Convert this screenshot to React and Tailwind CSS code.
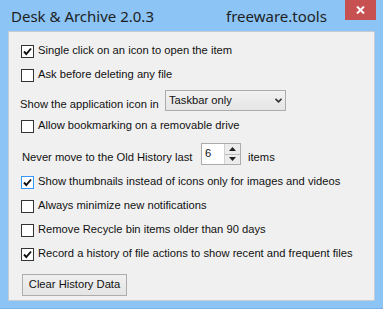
import React from 'react';

function CheckBox({ checked, focused }) {
  return (
    <span
      className={`inline-flex items-center justify-center w-[13px] h-[13px] shrink-0 bg-white border ${
        focused ? 'border-[#3399ff]' : 'border-[#333333]'
      }`}
    >
      {checked && (
        <svg width="9" height="9" viewBox="0 0 9 9">
          <path d="M1 4.5 L3.3 7 L8 1.5" fill="none" stroke="#111" strokeWidth="1.9" />
        </svg>
      )}
    </span>
  );
}

function CheckRow({ label, checked, focused, className = '' }) {
  return (
    <div className={`flex items-center h-6 pl-3 gap-1 ${className}`}>
      <CheckBox checked={checked} focused={focused} />
      <span className="text-[11.2px] text-[#111] leading-none">{label}</span>
    </div>
  );
}

export default function App() {
  return (
    <div
      className="w-[383px] h-[309px] bg-[#8bc4f5] flex flex-col border-b border-[#78b2e6]"
      style={{ fontFamily: '"Liberation Sans", Arial, sans-serif' }}
    >
      <div className="h-[31px] flex items-start shrink-0">
        <div
          className="pl-[11px] pt-[5px] text-[15px] text-[#1e1e1e] w-[226px]"
          style={{ fontFamily: '"Noto Sans", "Open Sans", sans-serif' }}
        >
          Desk &amp; Archive 2.0.3
        </div>
        <div
          className="pt-[5px] text-[15px] text-[#1e1e1e]"
          style={{ fontFamily: '"Noto Sans", "Open Sans", sans-serif' }}
        >
          freeware.tools
        </div>
        <div className="ml-auto mr-[7px] w-[31px] h-[20px] bg-[#c75050] flex items-center justify-center">
          <svg width="9" height="8" viewBox="0 0 9 8">
            <path d="M1 0.5 L8 7.5 M8 0.5 L1 7.5" stroke="#fff" strokeWidth="2" />
          </svg>
        </div>
      </div>

      <div className="mx-[8px] mb-[7px] h-[270px] bg-[#f0f0f0] border border-[#c4ccd4] flex flex-col pt-[7px]">
        <CheckRow checked label="Single click on an icon to open the item" />
        <CheckRow label="Ask before deleting any file" />

        <div className="flex items-start h-6 mt-[2px] pl-[11px]">
          <span className="text-[11.2px] text-[#111] leading-none pt-[10px] w-[145px]">
            Show the application icon in
          </span>
          <div className="mt-[1px] w-[121px] h-[21px] border border-[#acacac] bg-gradient-to-b from-[#f2f2f2] to-[#e5e5e5] flex items-center pl-[3px] pr-[3px]">
            <span className="text-[11.2px] text-[#111] leading-none">Taskbar only</span>
            <svg className="ml-auto" width="7" height="5" viewBox="0 0 7 5">
              <path d="M0.5 0.8 L3.5 3.8 L6.5 0.8" fill="none" stroke="#333" strokeWidth="1.6" />
            </svg>
          </div>
        </div>

        <CheckRow label="Allow bookmarking on a removable drive" className="mt-[1px]" />

        <div className="flex items-start h-6 mt-[4px] pl-[13px]">
          <span className="text-[11.2px] text-[#111] leading-none pt-[10px] w-[179px]">
            Never move to the Old History last
          </span>
          <div className="mt-[1px] w-[40px] h-[22px] border border-[#acacac] bg-white flex">
            <span className="text-[11.2px] text-[#111] leading-none pl-[3px] pt-[4px] w-[22px]">6</span>
            <div className="ml-auto w-[16px] flex flex-col border-l border-[#d0d0d0]">
              <div className="flex-1 bg-[#ececec] border-b border-[#bdbdbd] flex items-center justify-center">
                <svg width="7" height="4" viewBox="0 0 7 4"><path d="M0 4 L3.5 0 L7 4 Z" fill="#222" /></svg>
              </div>
              <div className="flex-1 bg-[#ececec] flex items-center justify-center">
                <svg width="7" height="4" viewBox="0 0 7 4"><path d="M0 0 L3.5 4 L7 0 Z" fill="#222" /></svg>
              </div>
            </div>
          </div>
          <span className="text-[11.2px] text-[#111] leading-none pt-[10px] ml-[7px]">items</span>
        </div>

        <CheckRow checked focused label="Show thumbnails instead of icons only for images and videos" className="mt-[4px]" />
        <CheckRow label="Always minimize new notifications" />
        <CheckRow label="Remove Recycle bin items older than 90 days" />
        <CheckRow checked label="Record a history of file actions to show recent and frequent files" />

        <div className="pl-[13px] mt-[5px]">
          <button className="w-[105px] h-[22px] border border-[#adadad] bg-gradient-to-b from-[#f0f0f0] to-[#e5e5e5] text-[11.2px] text-[#111] leading-none">
            Clear History Data
          </button>
        </div>
      </div>
    </div>
  );
}
